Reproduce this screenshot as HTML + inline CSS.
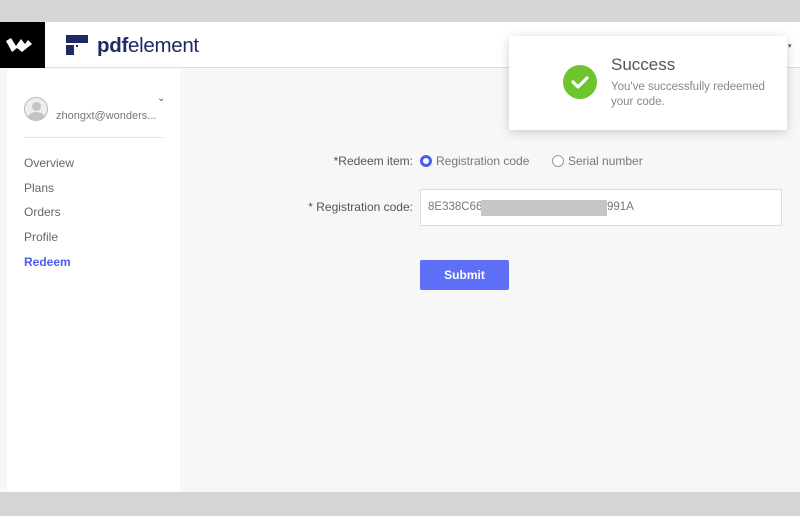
<!DOCTYPE html>
<html><head><meta charset="utf-8"><style>
*{margin:0;padding:0;box-sizing:border-box}
body{width:800px;height:516px;overflow:hidden;background:#f7f7f7;font-family:"Liberation Sans",sans-serif;position:relative}
.abs{position:absolute}
</style></head><body>
<div class="abs" style="left:0;top:0;width:800px;height:22px;background:#d5d5d5"></div>
<div class="abs" style="left:0;top:22px;width:800px;height:46px;background:#fff;border-bottom:1px solid #ddd"></div>
<div class="abs" style="left:0;top:22px;width:45px;height:46px;background:#000">
<svg width="45" height="46"><path d="M6 19 L11 16 L16 24 L21 17 L25 22 L28 18 L32 22 L22 30 L17 26 L12 30 Z" fill="#fff"/></svg></div>
<svg class="abs" style="left:66px;top:35px" width="24" height="22"><rect x="0" y="0" width="22" height="8" fill="#1d2a63"/><rect x="0" y="10" width="8" height="10" fill="#1d2a63"/><rect x="10" y="10" width="2" height="2" fill="#1d2a63"/></svg>
<div class="abs" style="left:97px;top:34px;font-size:20.5px;color:#1d2a63;letter-spacing:-0.3px"><b>pdf</b>element</div>
<div class="abs" style="left:788px;top:42px;font-size:7px;color:#555">▾</div>
<div class="abs" style="left:7px;top:69px;width:173px;height:423px;background:#fff"></div>
<div class="abs" style="left:24px;top:97px;width:24px;height:24px;border-radius:50%;border:1px solid #bbb;background:#eee;overflow:hidden">
<div class="abs" style="left:7px;top:4px;width:9px;height:9px;border-radius:50%;background:#c4c4c4"></div>
<div class="abs" style="left:3px;top:14px;width:17px;height:12px;border-radius:50%;background:#c4c4c4"></div></div>
<div class="abs" style="left:56px;top:110px;font-size:11px;color:#777">zhongxt@wonders...</div>
<div class="abs" style="left:157px;top:93px;font-size:10px;color:#555">⌄</div>
<div class="abs" style="left:24px;top:137px;width:139px;height:1px;background:#e3e3e3"></div>
<div class="abs" style="left:24px;top:151px;font-size:12px;color:#666;line-height:24.7px">Overview<br>Plans<br>Orders<br>Profile<br><span style="color:#4b5cf0;font-weight:bold">Redeem</span></div>
<div class="abs" style="left:300px;top:154px;width:113px;text-align:right;font-size:12px;color:#555">*Redeem item:</div>
<div class="abs" style="left:420px;top:155px;width:12px;height:12px;border-radius:50%;border:3.5px solid #4b5cf0;background:#fff"></div>
<div class="abs" style="left:436px;top:154px;font-size:12px;color:#777">Registration code</div>
<div class="abs" style="left:552px;top:155px;width:12px;height:12px;border-radius:50%;border:1px solid #999;background:#fff"></div>
<div class="abs" style="left:568px;top:154px;font-size:12px;color:#777">Serial number</div>
<div class="abs" style="left:280px;top:200px;width:133px;text-align:right;font-size:12px;color:#555">* Registration code:</div>
<div class="abs" style="left:420px;top:189px;width:362px;height:37px;background:#fff;border:1px solid #ddd"></div>
<div class="abs" style="left:428px;top:201px;font-size:11.5px;color:#777">8E338C66</div>
<div class="abs" style="left:481px;top:200px;width:126px;height:16px;background:#c6c6c6"></div>
<div class="abs" style="left:607px;top:201px;font-size:11.5px;color:#777">991A</div>
<div class="abs" style="left:420px;top:260px;width:89px;height:30px;background:#5e6ff8;border-radius:2px;color:#fff;font-size:12px;font-weight:bold;text-align:center;line-height:30px">Submit</div>
<div class="abs" style="left:509px;top:36px;width:278px;height:94px;background:#fff;box-shadow:0 2px 10px rgba(0,0,0,.18)"></div>
<svg class="abs" style="left:563px;top:65px" width="34" height="34"><circle cx="17" cy="17" r="17" fill="#6ec42c"/><path d="M10 17 L15 22 L24 13" stroke="#fff" stroke-width="3.2" fill="none" stroke-linecap="round" stroke-linejoin="round"/></svg>
<div class="abs" style="left:611px;top:55px;font-size:17px;color:#555">Success</div>
<div class="abs" style="left:611px;top:80px;font-size:11.5px;color:#888;line-height:15px;width:170px">You've successfully redeemed your code.</div>
<div class="abs" style="left:0;top:492px;width:800px;height:24px;background:#d5d5d5"></div>
</body></html>
